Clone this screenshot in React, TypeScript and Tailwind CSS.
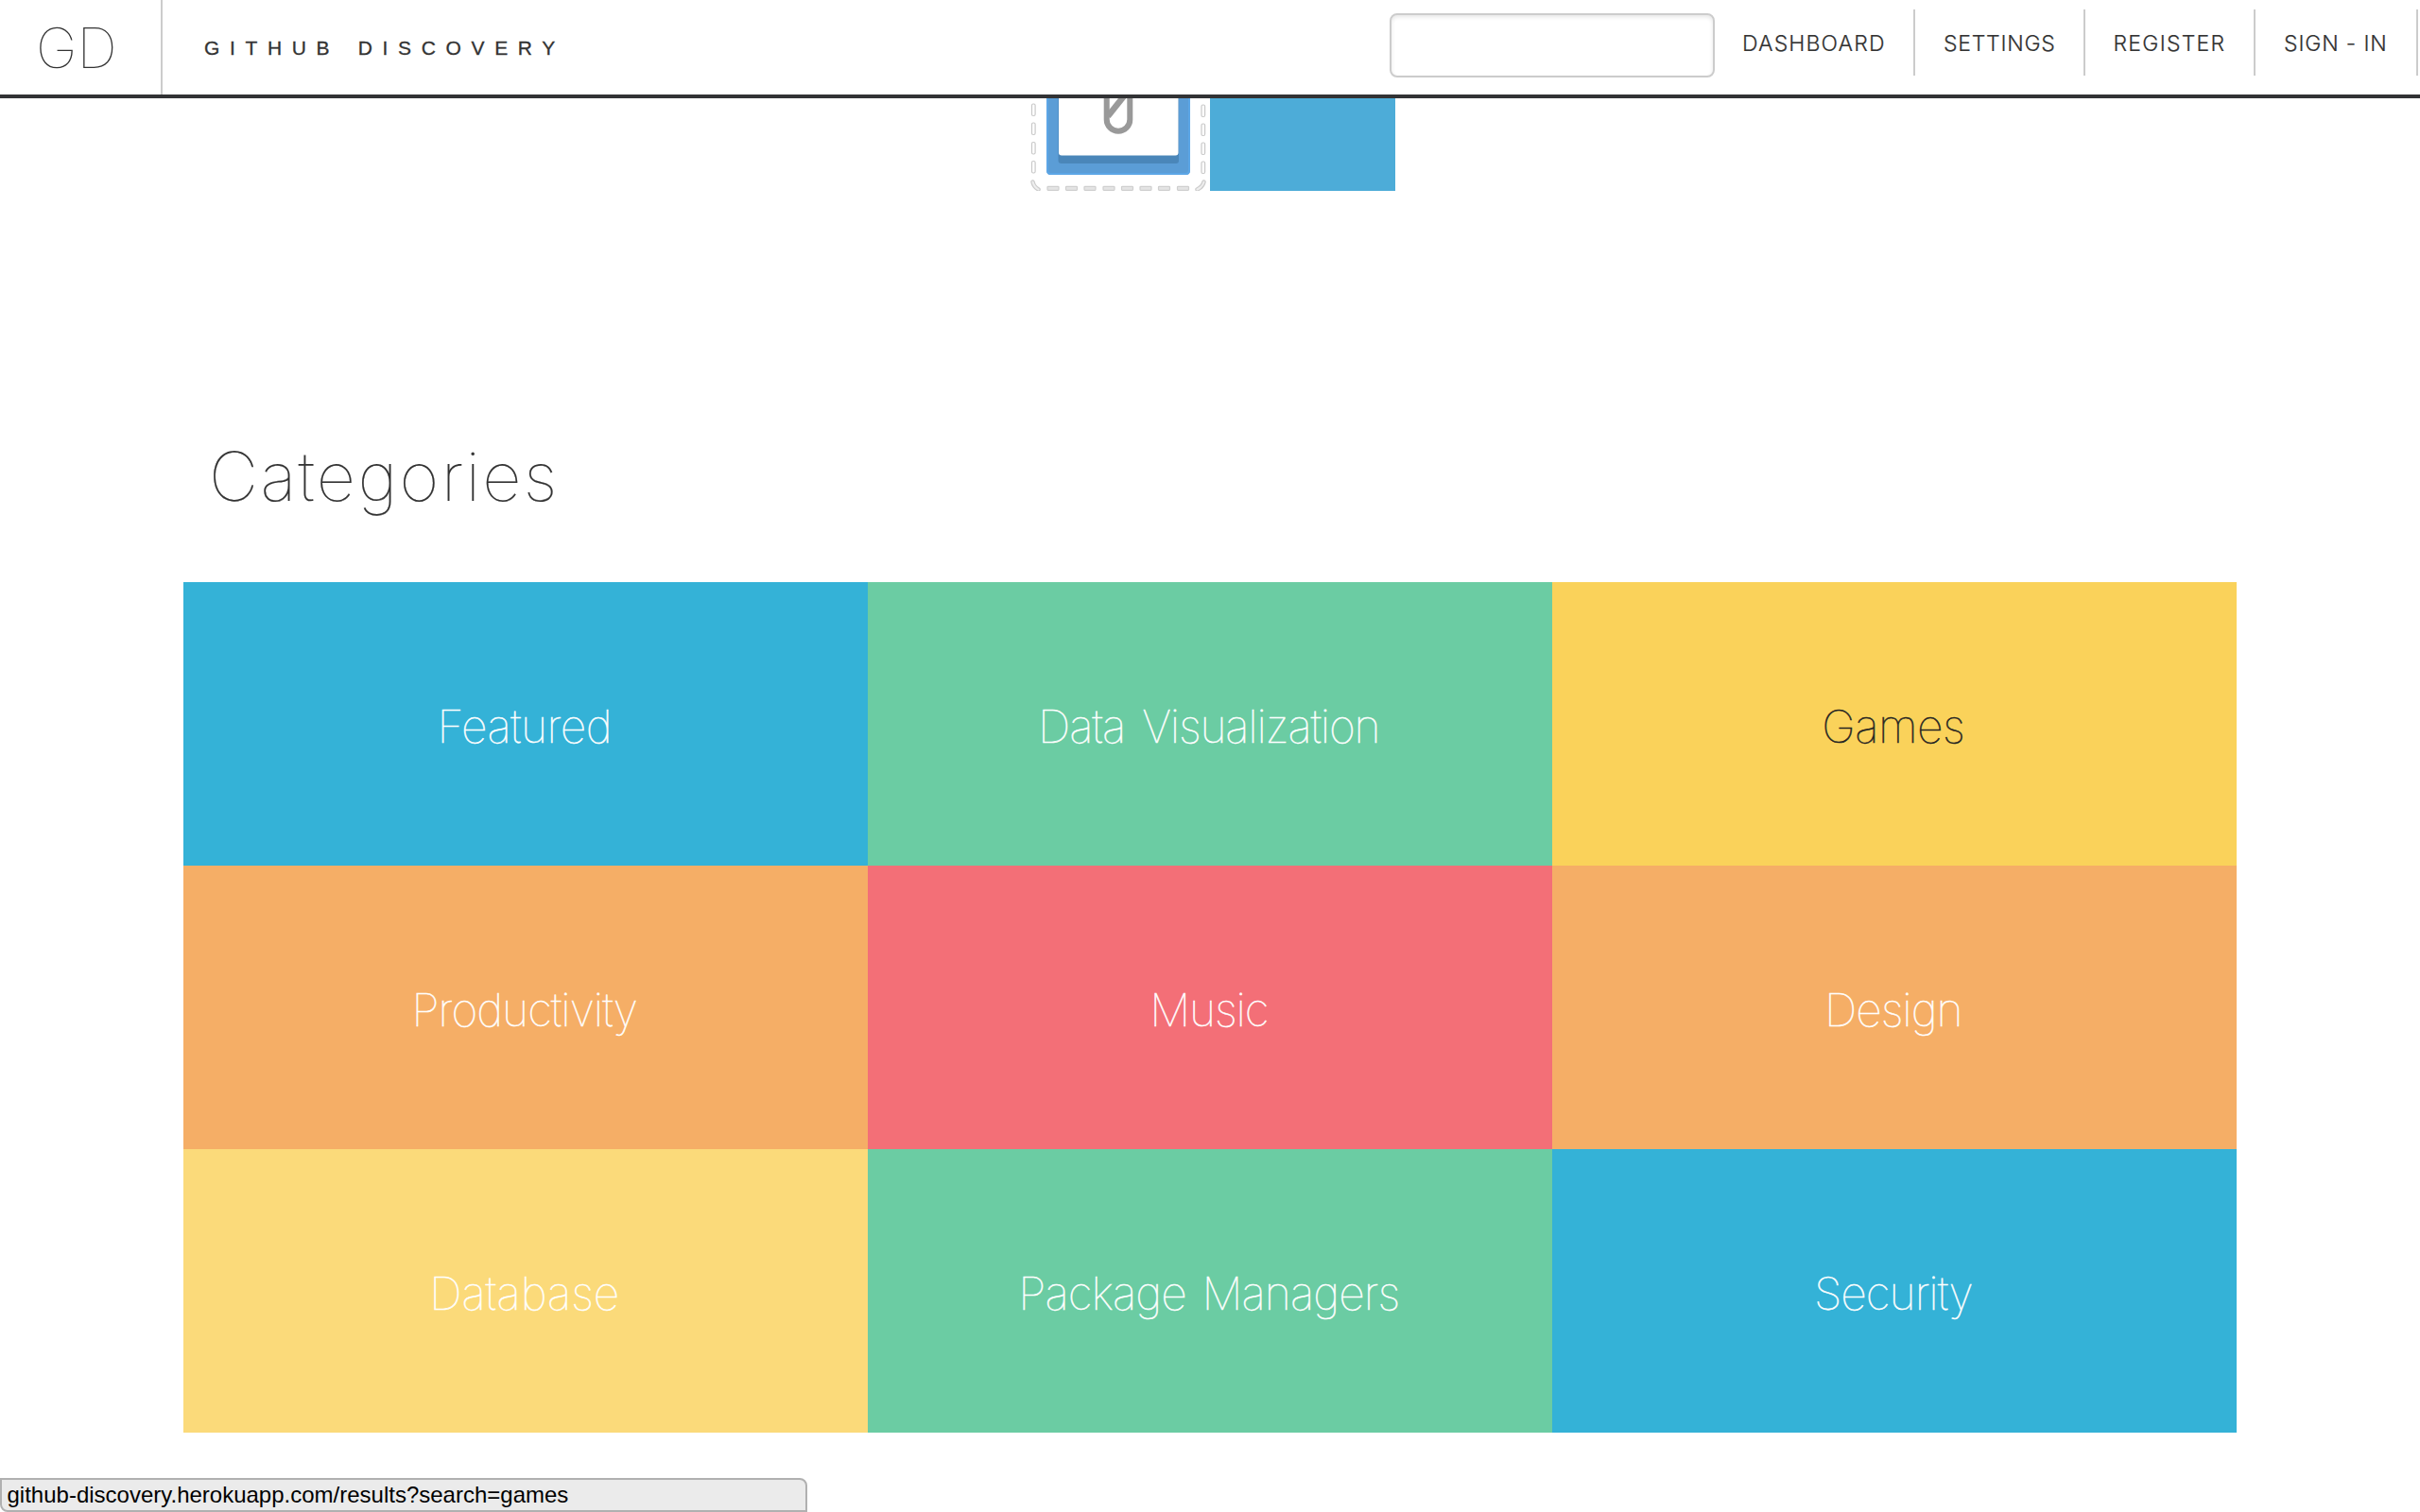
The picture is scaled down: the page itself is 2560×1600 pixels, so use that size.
const navItems = [
  { label: "DASHBOARD", cls: "w-[212px] pl-[29px] tracking-[1.15px]" },
  { label: "SETTINGS", cls: "w-[180px] pl-[30px] tracking-[0.75px]" },
  { label: "REGISTER", cls: "w-[180px] pl-[29.5px] tracking-[1.25px]" },
  { label: "SIGN - IN", cls: "w-[172px] pl-[30px] tracking-[0.85px]" },
];

const categories = [
  { name: "Featured", cls: "bg-[#34b2d7] text-white tracking-[-0.55px]" },
  { name: "Data Visualization", cls: "bg-[#6bcca3] text-white tracking-[-1.2px] [word-spacing:6px]" },
  { name: "Games", cls: "bg-[#fad25a] text-[#222222] tracking-[-0.5px]" },
  { name: "Productivity", cls: "bg-[#f5ae66] text-white tracking-[-1px]" },
  { name: "Music", cls: "bg-[#f36f77] text-white tracking-[-1.1px]" },
  { name: "Design", cls: "bg-[#f5ae66] text-white tracking-[-1px]" },
  { name: "Database", cls: "bg-[#fbda7a] text-white tracking-[-0.05px]" },
  { name: "Package Managers", cls: "bg-[#6bcca3] text-white tracking-[-0.9px] [word-spacing:4px]" },
  { name: "Security", cls: "bg-[#34b2d7] text-white tracking-[-0.95px]" },
];

const leftDashes = [6, 26, 46.5, 66.5];
const rightDashes = [7, 27, 47, 67];
const bottomDashes = [20, 39.5, 59, 79, 98.5, 118, 137.5, 157.5];

function ProjectLogo() {
  return (
    <svg className="h-[98px] w-48" viewBox="0 0 192 98">
      <path d="M19 0H171V76.5Q171 81 166.500 81H23.500Q19 81 19 76.500Z" fill="#5b9dd6" />
      <path d="M20 0V76Q20 80 24 80H166Q170 80 170 76V0" fill="none" stroke="#5ca6e6" strokeWidth="2" />
      <path d="M31.500 0H33V60H157V0H159V66Q159 69 156 69H35Q31.500 69 31.500 66Z" fill="#4a86b9" />
      <path d="M32 0H158.500V57.500Q158.500 60.500 155.500 60.500H35Q32 60.500 32 57.500Z" fill="#ffffff" />
      <path d="M82.700 0V22.400A12.300 12.300 0 0 0 107.300 22.400V0" fill="none" stroke="#999999" strokeWidth="6" />
      <path d="M84 19L101.500 -3" fill="none" stroke="#999999" strokeWidth="6.500" />
      <g fill="#ffffff" stroke="#c9c9c9" strokeWidth="1.200">
        {leftDashes.map((y) => (
          <rect key={y} x="3.500" y={y} width="3.600" height="12.500" rx="1.500" />
        ))}
        {rightDashes.map((y) => (
          <rect key={y} x="183" y={y} width="3.600" height="12.500" rx="1.500" />
        ))}
      </g>
      <g fill="#e4e4e4" stroke="#cfcfcf" strokeWidth="1.200">
        {bottomDashes.map((x) => (
          <rect key={x} x={x} y="93.300" width="12" height="4" rx="0.800" />
        ))}
      </g>
      <path d="M4.500 88.500Q5.500 93.500 10.500 96.500M185.500 88.500Q184.500 93.500 178.500 96.500" fill="none" stroke="#cccccc" strokeWidth="4.500" strokeLinecap="round" />
      <path d="M4.500 88.500Q5.500 93.500 10.500 96.500M185.500 88.500Q184.500 93.500 178.500 96.500" fill="none" stroke="#eeeeee" strokeWidth="2" strokeLinecap="round" />
    </svg>
  );
}

export default function App() {
  return (
    <div className="relative flex h-[1600px] w-[2560px] flex-col overflow-hidden bg-white font-['Inter',sans-serif] text-[#333333]">
      <header className="flex h-[104px] shrink-0 border-b-4 border-[#323335] bg-white">
        <div className="flex w-[172px] items-center border-r-2 border-[#cccccc] pl-[38px]">
          <span className="text-[59px] leading-none font-thin">GD</span>
        </div>
        <div className="flex items-center pl-11">
          <span className="font-['Liberation_Sans',sans-serif] text-[21px] leading-none tracking-[10.65px] whitespace-nowrap [-webkit-text-stroke:0.3px] [word-spacing:3px]">
            GITHUB DISCOVERY
          </span>
        </div>
        <div className="ml-auto flex pr-0.5">
          <input
            type="text"
            className="mt-3.5 h-[68px] w-[344px] rounded-lg border-2 border-[#cccccc] bg-white px-3 text-2xl shadow-[inset_0_2px_4px_rgba(0,0,0,0.1)] outline-none"
          />
          <nav className="mt-2.5 flex h-[70px]">
            {navItems.map((item) => (
              <a
                key={item.label}
                className={`flex items-center border-r-2 border-[#cccccc] pt-[3px] text-[23px] font-light whitespace-nowrap [-webkit-text-stroke:0.2px] ${item.cls}`}
              >
                {item.label}
              </a>
            ))}
          </nav>
        </div>
      </header>

      <section className="flex h-[98px] shrink-0 pl-[1088px]">
        <ProjectLogo />
        <div className="h-full w-[196px] bg-[#4dacd8]" />
      </section>

      <main className="px-[194px]">
        <h1 className="mt-[257px] mb-[67px] pl-[27px] text-[72px] leading-[90px] font-thin tracking-[2.35px] [-webkit-text-stroke:0.2px]">
          Categories
        </h1>
        <div className="grid grid-cols-3">
          {categories.map((c) => (
            <a
              key={c.name}
              className={`flex h-[300px] items-center justify-center pt-[5px] pr-[2.5px] text-[48px] leading-none font-thin whitespace-nowrap [-webkit-text-stroke:0.5px] ${c.cls}`}
            >
              {c.name}
            </a>
          ))}
        </div>
      </main>

      <div className="absolute bottom-0 left-0 flex h-9 w-[854px] items-center rounded-tr-lg rounded-bl-lg border-2 border-[#b0b0b0] bg-[#ebebeb] pl-[5.5px] font-['Liberation_Sans',sans-serif] text-2xl leading-none text-black">
        github-discovery.herokuapp.com/results?search=games
      </div>
    </div>
  );
}
